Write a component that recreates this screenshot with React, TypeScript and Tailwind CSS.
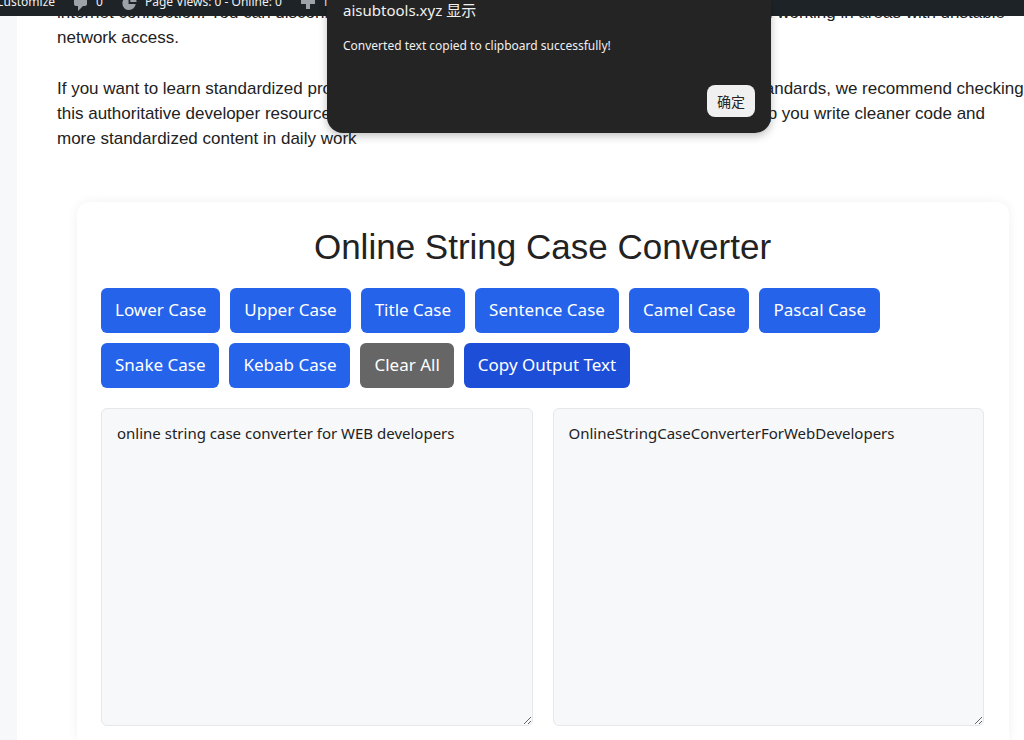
import React, { useState } from 'react';

type CaseKind = 'lower' | 'upper' | 'title' | 'sentence' | 'camel' | 'pascal' | 'snake' | 'kebab';

const caseButtons: { kind: CaseKind; label: string }[] = [
    { kind: 'lower', label: 'Lower Case' },
    { kind: 'upper', label: 'Upper Case' },
    { kind: 'title', label: 'Title Case' },
    { kind: 'sentence', label: 'Sentence Case' },
    { kind: 'camel', label: 'Camel Case' },
    { kind: 'pascal', label: 'Pascal Case' },
    { kind: 'snake', label: 'Snake Case' },
    { kind: 'kebab', label: 'Kebab Case' }
];

const capitalize = (word: string) => word.charAt(0).toUpperCase() + word.slice(1);

const convertText = (text: string, kind: CaseKind): string => {
    const lower = text.toLowerCase();
    const words = lower.split(/[^a-z0-9]+/).filter(Boolean);

    switch (kind) {
        case 'lower':
            return lower;
        case 'upper':
            return text.toUpperCase();
        case 'title':
            return words.map(capitalize).join(' ');
        case 'sentence':
            return capitalize(lower);
        case 'camel':
            return words.map((w, i) => (i === 0 ? w : capitalize(w))).join('');
        case 'pascal':
            return words.map(capitalize).join('');
        case 'snake':
            return words.join('_');
        case 'kebab':
            return words.join('-');
    }
};

const AdminBar: React.FC = () => (
    <header className="h-4 shrink-0 overflow-hidden bg-[#1d2327] text-[#f0f0f1]">
        <nav className="-mt-[14px] -ml-1 flex h-8 items-center gap-[18px] whitespace-nowrap font-['Noto_Sans',sans-serif] text-[12px]">
            <a href="#customize">Customize</a>
            <a href="#comments" className="flex items-center gap-2">
                <svg viewBox="2 2 15 16" className="mt-0.5 h-4 w-[15px] fill-[#9ca2a7]" aria-hidden="true">
                    <path d="M5 2h9c1.100 0 2 .9 2 2v7c0 1.100-.9 2-2 2h-2l-5 5v-5H5c-1.100 0-2-.9-2-2V4c0-1.100.9-2 2-2z" />
                </svg>
                0
            </a>
            <a href="#stats" className="flex items-center gap-2">
                <svg viewBox="1 1 17 18" className="mt-0.5 h-4 w-4 fill-[#9ca2a7]" aria-hidden="true">
                    <path d="M9 3v8h8a7.500 7.500 0 1 1-8-8z" />
                    <path d="M11 1a8 8 0 0 1 7 8h-7z" />
                </svg>
                Page Views: 0 - Online: 0
            </a>
            <a href="#new" className="flex items-center gap-2">
                <svg viewBox="2 2 16 16" className="h-4 w-4 fill-[#9ca2a7]" aria-hidden="true">
                    <path d="M17 8v4h-5v5H8v-5H3V8h5V3h4v5z" />
                </svg>
                New
            </a>
        </nav>
    </header>
);

const Intro: React.FC = () => (
    <div className="-mt-4 space-y-[26px] whitespace-nowrap pl-10 text-[17px] leading-[25px]">
        <p>
            internet connection. You can disconnect and keep converting your text at any place, even when working in areas with unstable
            <br />
            network access.
        </p>
        <p>
            If you want to learn standardized programming naming rules and more common web coding standards, we recommend checking
            <br />
            this authoritative developer resource on naming conventions and the code style. It can also help you write cleaner code and
            <br />
            more standardized content in daily work
        </p>
    </div>
);

interface AlertDialogProps {
    message: string;
    onClose: () => void;
}

const AlertDialog: React.FC<AlertDialogProps> = ({ message, onClose }) => (
    <div
        role="alertdialog"
        aria-labelledby="alert-title"
        className="absolute top-0 left-[327px] flex w-[444px] flex-col rounded-b-2xl bg-[#242424] px-4 pb-4 font-['Noto_Sans','Noto_Sans_CJK_SC',sans-serif] text-[#f0f0f0] shadow-[0_3px_8px_rgba(0,0,0,0.25)]"
    >
        <h2 id="alert-title" className="text-[15px] leading-5">aisubtools.xyz 显示</h2>
        <p className="mt-4 text-[12px] leading-5">{message}</p>
        <button
            type="button"
            onClick={onClose}
            className="mt-[29px] h-8 w-12 self-end rounded-lg bg-[#f0f0f0] text-[14px] text-[#242424]"
        >
            确定
        </button>
    </div>
);

const App: React.FC = () => {
    const [input, setInput] = useState('online string case converter for WEB developers');
    const [output, setOutput] = useState('OnlineStringCaseConverterForWebDevelopers');
    const [message, setMessage] = useState('Converted text copied to clipboard successfully!');

    const handleClear = () => {
        setInput('');
        setOutput('');
    };

    const handleCopy = () => {
        navigator.clipboard?.writeText(output);
        setMessage('Converted text copied to clipboard successfully!');
    };

    const buttonClass = 'h-[45px] rounded-md px-[14px] pb-0.5 text-[17px] text-white';
    const areaClass =
        'h-[318px] min-w-0 flex-1 resize rounded-md border border-[#e5e7eb] bg-[#f6f8fa] px-[15px] py-3 text-[15px] leading-6 outline-none';

    return (
        <div className="relative flex h-screen flex-col overflow-hidden bg-[#f6f8fa] font-['Liberation_Sans',Arial,sans-serif] text-[#222222]">
            <AdminBar />
            <main className="ml-[17px] flex min-h-0 flex-1 flex-col overflow-hidden bg-white">
                <Intro />
                <section className="mt-[51px] mr-[15px] ml-[60px] flex-1 rounded-t-xl bg-white pt-6 pr-[25px] pl-6 shadow-[0_0_12px_rgba(0,0,0,0.06)]">
                    <h1 className="text-center text-[35px] leading-[42px]">Online String Case Converter</h1>
                    <div className="mt-5 flex flex-wrap gap-[10px] font-['Noto_Sans',sans-serif]">
                        {caseButtons.map(({ kind, label }) => (
                            <button
                                key={kind}
                                type="button"
                                onClick={() => setOutput(convertText(input, kind))}
                                className={`${buttonClass} bg-[#2563eb]`}
                            >
                                {label}
                            </button>
                        ))}
                        <button type="button" onClick={handleClear} className={`${buttonClass} bg-[#666666]`}>
                            Clear All
                        </button>
                        <button type="button" onClick={handleCopy} className={`${buttonClass} bg-[#1d4ed8]`}>
                            Copy Output Text
                        </button>
                    </div>
                    <div className="mt-5 flex gap-5 font-['Noto_Sans',sans-serif]">
                        <textarea
                            aria-label="Input text"
                            value={input}
                            onChange={(e) => setInput(e.target.value)}
                            className={areaClass}
                        />
                        <textarea aria-label="Output text" value={output} readOnly className={areaClass} />
                    </div>
                </section>
            </main>
            {message && <AlertDialog message={message} onClose={() => setMessage('')} />}
        </div>
    );
};

export default App;
